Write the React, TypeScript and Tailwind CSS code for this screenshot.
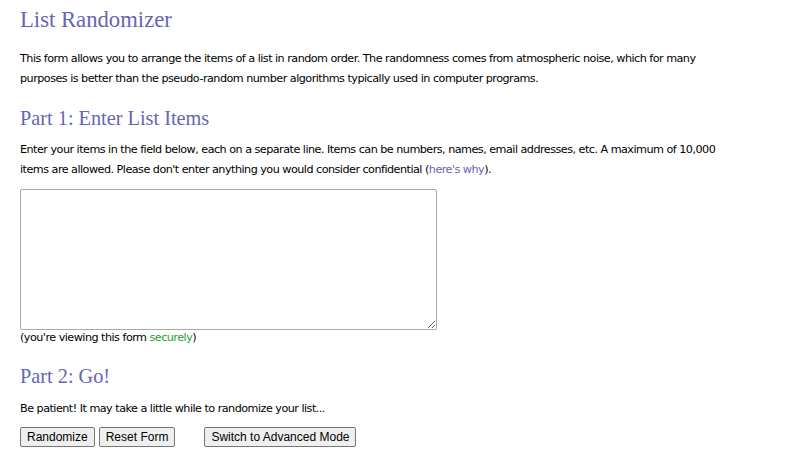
import React from 'react';

const heading = "text-[#6666b3] font-['Liberation_Serif',Georgia,serif]";
const btn = 'h-[20px] px-[6px] border border-[#767676] rounded-[2px] bg-[#efefef] leading-none';

const App = () => {
  return (
    <div className="min-h-screen bg-white px-5 text-black font-['DejaVu_Sans',Verdana,sans-serif] text-[11.2px] tracking-[-0.52px]">
      <h1 className={`pt-[6px] text-[22.7px] leading-[28px] tracking-normal ${heading}`}>List Randomizer</h1>

      <p className="mt-[15px] leading-[20px]">
        This form allows you to arrange the items of a list in random order. The randomness comes from atmospheric noise, which for many
        <br />
        purposes is better than the pseudo-random number algorithms typically used in computer programs.
      </p>

      <h2 className={`mt-[17px] text-[20.3px] leading-[24px] tracking-normal ${heading}`}>Part 1: Enter List Items</h2>

      <p className="mt-[10px] leading-[20px]">
        Enter your items in the field below, each on a separate line. Items can be numbers, names, email addresses, etc. A maximum of 10,000
        <br />
        items are allowed. Please don't enter anything you would consider confidential (
        <a className="text-[#6666b3]">here's why</a>).
      </p>

      <textarea className="mt-[9px] block w-[417px] h-[141px] border border-[#a9a9a9] rounded-[2px] bg-white outline-none" />

      <p className="leading-[16px]">
        (you're viewing this form <span className="text-[#339933]">securely</span>)
      </p>

      <h2 className={`mt-[18px] text-[20.3px] leading-[24px] tracking-normal ${heading}`}>Part 2: Go!</h2>

      <p className="mt-[11px] leading-[20px]">Be patient! It may take a little while to randomize your list...</p>

      <div className="mt-[8px] flex items-center font-['Liberation_Sans',Arial,sans-serif] text-[12px] tracking-normal text-black">
        <button className={btn}>Randomize</button>
        <button className={`ml-[4px] ${btn}`}>Reset Form</button>
        <button className={`ml-[29px] ${btn}`}>Switch to Advanced Mode</button>
      </div>
    </div>
  );
};

export default App;
